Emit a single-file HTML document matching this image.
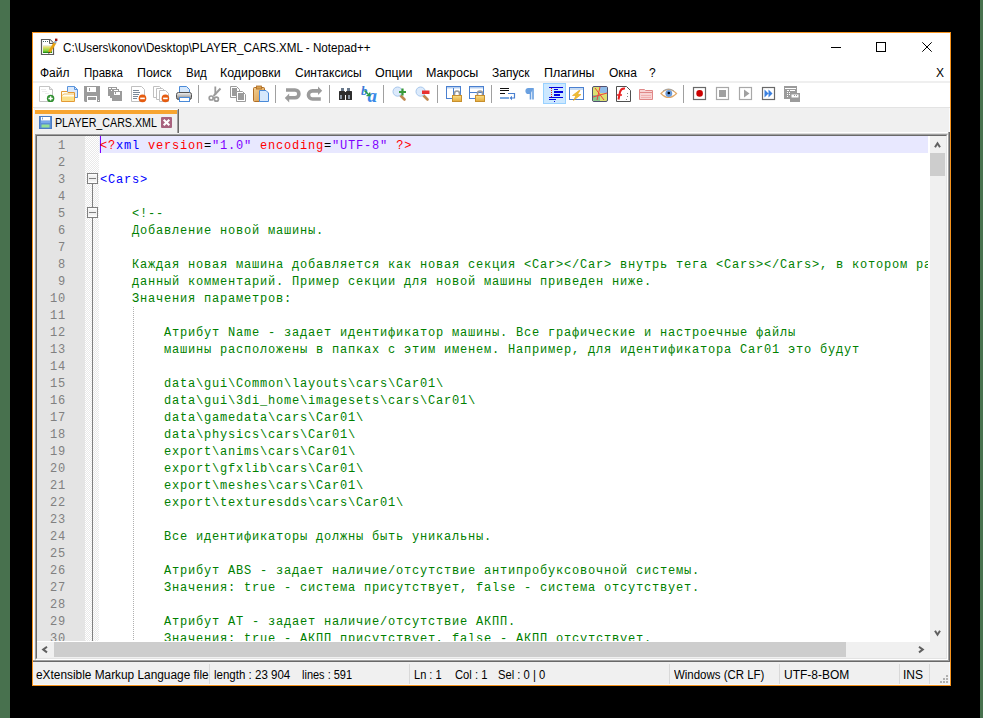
<!DOCTYPE html>
<html><head><meta charset="utf-8">
<style>
html,body{margin:0;padding:0}
body{width:983px;height:718px;background:#000;position:relative;overflow:hidden;font-family:"Liberation Sans",sans-serif;}
.a{position:absolute}
.t{position:absolute;white-space:pre;font-size:12px;line-height:12px;color:#000;transform-origin:0 0}
.ico{position:absolute;width:16px;height:16px}
.sep{position:absolute;width:1px;background:#a0a0a0}
.code{position:absolute;left:63px;white-space:pre;font-family:"Liberation Mono",monospace;font-size:12px;letter-spacing:0.8px;line-height:17px;height:17px;color:#008000;margin-top:2px}
.ln{position:absolute;left:0px;width:29px;text-align:right;white-space:pre;font-family:"Liberation Mono",monospace;font-size:12px;letter-spacing:0.8px;line-height:17px;height:17px;color:#808080;margin-top:2px}
.sb{position:absolute;top:664px;width:1px;height:20px;background:#d9d9d9}
</style></head><body>
<!-- desktop strips -->
<div class="a" style="left:0;top:0;width:10px;height:718px;background:#48714e"></div>
<div class="a" style="left:980px;top:0;width:3px;height:718px;background:#48714e"></div>

<!-- window -->
<div class="a" style="left:32px;top:32px;width:919px;height:654px;box-sizing:border-box;border:1px solid #f7941e;background:#fff"></div>

<!-- title -->
<div id="title" class="t" style="left:63px;top:42px;transform:scaleX(0.971)">C:\Users\konov\Desktop\PLAYER_CARS.XML - Notepad++</div>
<!-- window controls -->
<div class="a" style="left:831px;top:47px;width:10px;height:1px;background:#000"></div>
<div class="a" style="left:876px;top:42px;width:10px;height:10px;box-sizing:border-box;border:1px solid #000"></div>
<svg class="a" style="left:922px;top:42px" width="10" height="10"><path d="M0.3 0.3L9.7 9.7M9.7 0.3L0.3 9.7" stroke="#000" stroke-width="1"/></svg>

<!-- menu -->
<div class="t" id="mn1" style="left:40px;top:67px">Файл</div>
<div class="t" id="mn2" style="left:84px;top:67px;transform:scaleX(0.957)">Правка</div>
<div class="t" id="mn3" style="left:137px;top:67px;transform:scaleX(1.036)">Поиск</div>
<div class="t" id="mn4" style="left:186px;top:67px;transform:scaleX(0.96)">Вид</div>
<div class="t" id="mn5" style="left:220px;top:67px;transform:scaleX(1.03)">Кодировки</div>
<div class="t" id="mn6" style="left:295px;top:67px">Синтаксисы</div>
<div class="t" id="mn7" style="left:375px;top:67px;transform:scaleX(1.04)">Опции</div>
<div class="t" id="mn8" style="left:426px;top:67px;transform:scaleX(1.045)">Макросы</div>
<div class="t" id="mn9" style="left:492px;top:67px">Запуск</div>
<div class="t" id="mn10" style="left:544px;top:67px;transform:scaleX(1.04)">Плагины</div>
<div class="t" id="mn11" style="left:609px;top:67px">Окна</div>
<div class="t" id="mn12" style="left:649px;top:67px">?</div>
<div class="t" id="mnx" style="left:936px;top:67px">X</div>

<!-- toolbar -->
<div class="a" style="left:33px;top:81px;width:917px;height:2px;background:#efefef"></div>
<div class="a" style="left:33px;top:107px;width:917px;height:1px;background:#e3e3e3"></div>


<!-- tab bar -->
<div class="a" style="left:33px;top:108px;width:917px;height:552px;background:#f0f0f0"></div>
<div class="a" style="left:33px;top:108px;width:1px;height:552px;background:#fff"></div>
<div class="a" style="left:179px;top:132px;width:770px;height:1px;background:#fff"></div><div class="a" style="left:179px;top:133px;width:770px;height:1px;background:#dcdcdc"></div>
<!-- outer frame right/bottom dark -->
<div class="a" style="left:949px;top:108px;width:1px;height:24px;background:#fafcfe"></div>
<div class="a" style="left:948px;top:132px;width:1px;height:529px;background:#a0a0a0"></div><div class="a" style="left:949px;top:132px;width:1px;height:530px;background:#696969"></div>
<div class="a" style="left:33px;top:660px;width:916px;height:1px;background:#a0a0a0"></div><div class="a" style="left:33px;top:661px;width:917px;height:1px;background:#696969"></div>
<!-- tab -->
<div class="a" style="left:35px;top:109px;width:142px;height:25px;background:#f0f0f0;border-top:1px solid #fff"></div>
<div class="a" style="left:35px;top:110px;width:142px;height:4px;background:#f7a530"></div>
<div class="a" style="left:177px;top:110px;width:1px;height:23px;background:#a0a0a0"></div><div class="a" style="left:178px;top:109px;width:1px;height:24px;background:#696969"></div>
<div class="t" id="tabt" style="left:55px;top:117px;transform:scaleX(0.89)">PLAYER_CARS.XML</div>

<svg class="a" style="left:0;top:0" width="983" height="134" viewBox="0 0 983 134">
<defs>
<linearGradient id="gfold" x1="0" y1="0" x2="0" y2="1"><stop offset="0" stop-color="#fff3c8"/><stop offset="1" stop-color="#f7d36a"/></linearGradient>
<linearGradient id="gprn" x1="0" y1="0" x2="0" y2="1"><stop offset="0" stop-color="#f4f4f4"/><stop offset="0.5" stop-color="#b8b8b8"/><stop offset="1" stop-color="#777"/></linearGradient>
<linearGradient id="gclip" x1="0" y1="0" x2="1" y2="1"><stop offset="0" stop-color="#f2cf92"/><stop offset="1" stop-color="#d99a4a"/></linearGradient>
<linearGradient id="gnpp" x1="0" y1="0" x2="0" y2="1"><stop offset="0" stop-color="#e6f0ff"/><stop offset="0.25" stop-color="#e8e070"/><stop offset="0.75" stop-color="#7ed23a"/><stop offset="1" stop-color="#0a7a0a"/></linearGradient>
<linearGradient id="glock" x1="0" y1="0" x2="0" y2="1"><stop offset="0" stop-color="#fbe08a"/><stop offset="1" stop-color="#e2a93a"/></linearGradient>
</defs>
<!-- title icon -->
<path d="M41.5 39.5H50L53.5 43V54.5H41.5Z" fill="#fff" stroke="#5a5a5a" stroke-width="1.2"/>
<path d="M49.5 39.5V43.5H53.5" fill="#eee" stroke="#5a5a5a"/>
<path d="M43 41.5h1M45 41.5h1M47 41.5h1" stroke="#466" />
<rect x="43" y="45" width="9" height="8" fill="url(#gnpp)"/>
<path d="M49.2 52.3L55.5 42" stroke="#e8a010" stroke-width="2.6"/>
<path d="M54.6 43.2L56.2 40.6" stroke="#8ab0d8" stroke-width="2"/>
<rect x="55" y="38.6" width="2.4" height="2.4" fill="#a01010"/>
<path d="M48.5 53.5l1.2-1.5" stroke="#333" stroke-width="1.2"/>

<!-- 1 new -->
<path d="M39.5 86.5H49.5L52.5 89.5V101.5H39.5Z" fill="#fff" stroke="#c4c4c4"/>
<path d="M49.5 86.5V89.5H52.5" fill="#ececec" stroke="#c4c4c4"/>
<path d="M41 89.5h5M42 91.5h5M45 93.5h4" stroke="#ececec"/>
<circle cx="50.6" cy="98.4" r="3.7" fill="#2f8f2f"/>
<path d="M50.6 96.2v4.4M48.4 98.4h4.4" stroke="#fff" stroke-width="1.5"/>
<!-- 2 open -->
<path d="M67.5 86.5H74.5L77.5 89.5V97.5H67.5Z" fill="#dbe9fb" stroke="#5a94dc"/>
<path d="M74.5 86.5V89.5H77.5" fill="none" stroke="#5a94dc"/>
<path d="M61.5 91.5H67L68 92.5H74.5V101.5H61.5Z" fill="#fffdf2" stroke="#e39a35"/>
<path d="M62 96.5H74V101H62Z" fill="#fbe08a"/>
<path d="M62 95.5L64 94H74" fill="none" stroke="#f0c060"/>
<!-- 3 save -->
<path d="M84 86H100V102H85L84 101Z" fill="#9b9b9b"/>
<rect x="87" y="87" width="9" height="5" fill="#fff"/>
<rect x="89" y="88" width="1" height="3" fill="#9b9b9b"/>
<rect x="87" y="96" width="10" height="6" fill="#fff"/>
<rect x="88" y="97" width="8" height="3" fill="#9b9b9b"/>
<rect x="98" y="100" width="1" height="1" fill="#fff"/>
<!-- 4 save all -->
<rect x="108" y="87" width="9" height="9" fill="#9b9b9b"/>
<rect x="109" y="88" width="2" height="1" fill="#fff"/><rect x="112" y="88" width="4" height="1" fill="#fff"/>
<rect x="110" y="89" width="9" height="9" fill="#9b9b9b"/>
<rect x="110" y="89" width="1" height="1" fill="#9b9b9b"/>
<rect x="111" y="90" width="1" height="1" fill="#fff"/><rect x="114" y="90" width="4" height="1" fill="#fff"/>
<rect x="112" y="91" width="10" height="10" fill="#9b9b9b"/>
<rect x="114" y="92" width="6" height="3" fill="#fff"/>
<rect x="115" y="92" width="1" height="2" fill="#9b9b9b"/>
<!-- 5 close -->
<path d="M131.5 86.5H141.5L144.5 89.5V101.5H131.5Z" fill="#fff" stroke="#c0c0c0"/>
<path d="M133 90.5h6M133 92.5h7M133 94.5h6M133 96.5h5M133 98.5h4" stroke="#7a8898"/>
<circle cx="142.5" cy="98.4" r="3.8" fill="#e65c10"/>
<path d="M140.2 98.4h4.6" stroke="#fff" stroke-width="1.6"/>
<!-- 6 close all -->
<path d="M153.5 86.5H159.5L161.5 88.5V97.5H153.5Z" fill="#fff" stroke="#c0c0c0"/>
<path d="M156.5 88.5H162.5L164.5 90.5V99.5H156.5Z" fill="#fff" stroke="#c0c0c0"/>
<path d="M159.5 90.5H165.5L168.5 93.5V101.5H159.5Z" fill="#fff" stroke="#c0c0c0"/>
<circle cx="165.4" cy="98.4" r="3.8" fill="#e65c10"/>
<path d="M163.1 98.4h4.6" stroke="#fff" stroke-width="1.6"/>
<!-- 7 print -->
<path d="M179.5 86.5H186.5L189.5 89.5V94.5H179.5Z" fill="#d6e8fc" stroke="#4a8ad8"/>
<rect x="176.5" y="92.5" width="15" height="7" rx="2" fill="url(#gprn)" stroke="#505050"/>
<rect x="179.5" y="97.5" width="10" height="4" fill="#fff" stroke="#4a8ad8"/>
<!-- sep -->
<rect x="198" y="85" width="1" height="18" fill="#a0a0a0"/>
<!-- 8 cut -->
<path d="M215.3 86.5V95" stroke="#9b9b9b" stroke-width="1.8"/>
<path d="M220.5 88.5L213.5 96" stroke="#9b9b9b" stroke-width="1.9"/>
<circle cx="211.2" cy="98" r="2" fill="none" stroke="#9b9b9b" stroke-width="1.7"/>
<circle cx="216.4" cy="99.2" r="2" fill="none" stroke="#9b9b9b" stroke-width="1.7"/>
<!-- 9 copy -->
<path d="M230.5 86.5H236.5L239.5 89.5V97.5H230.5Z" fill="#fff" stroke="#9b9b9b"/>
<rect x="232" y="88" width="5" height="8" fill="#9b9b9b"/>
<path d="M236.5 91.5H242.5L245.5 94.5V101.5H236.5Z" fill="#fff" stroke="#9b9b9b"/>
<rect x="238" y="93" width="6" height="7" fill="#9b9b9b"/>
<!-- 10 paste -->
<rect x="253.5" y="87.5" width="11" height="14" rx="1" fill="url(#gclip)" stroke="#b06d25"/>
<rect x="256.5" y="86" width="5" height="3" fill="#d8a050" stroke="#b06d25" stroke-width="0.8"/>
<path d="M259.5 90.5H266L268.5 93V101.5H259.5Z" fill="#d6e8fc" stroke="#4a8ad8"/>
<!-- sep -->
<rect x="275" y="85" width="1" height="18" fill="#a0a0a0"/>
<!-- 11 undo -->
<path d="M286 90H295A3.9 3.9 0 0 1 295 97.8H288.5" fill="none" stroke="#9b9b9b" stroke-width="3.6"/>
<path d="M284.8 97.9L289.2 93.4V102.4Z" fill="#9b9b9b"/>
<!-- 12 redo -->
<path d="M318.5 90.9H312.5A4.05 4.05 0 0 0 312.5 99H320.8" fill="none" stroke="#9b9b9b" stroke-width="3.6"/>
<path d="M322.2 90.8L318 86.6V95Z" fill="#9b9b9b"/>
<!-- sep -->
<rect x="329" y="85" width="1" height="18" fill="#a0a0a0"/>
<!-- 13 find -->
<rect x="341" y="88" width="3" height="4" fill="#6a7a8c"/>
<rect x="347" y="88" width="3" height="4" fill="#6a7a8c"/>
<rect x="339" y="91" width="6" height="9" rx="0.5" fill="#2e2e2e"/>
<rect x="346" y="91" width="6" height="9" rx="0.5" fill="#2e2e2e"/>
<rect x="344" y="92" width="3" height="3" fill="#2e2e2e"/>
<rect x="340" y="95" width="2" height="4" fill="#8a96a4"/>
<rect x="348" y="95" width="2" height="4" fill="#8a96a4"/>
<!-- 14 replace -->
<text x="361" y="95" font-family="Liberation Serif" font-style="italic" font-weight="bold" font-size="13" fill="#3a7ad8">b</text>
<text x="367.5" y="101.5" font-family="Liberation Serif" font-style="italic" font-weight="bold" font-size="19" fill="#3a8ae8">a</text>
<path d="M364.5 90.5L369 95" stroke="#2a9a4a" stroke-width="1.6"/>
<path d="M366.5 95.6h3.2v-3.2" fill="none" stroke="#2a9a4a" stroke-width="1.4"/>
<!-- sep -->
<rect x="383" y="85" width="1" height="18" fill="#a0a0a0"/>
<!-- 15 zoom in -->
<path d="M400.5 95.5L404.5 99.5" stroke="#c08850" stroke-width="2.6" stroke-linecap="round"/>
<circle cx="397.6" cy="91.6" r="4.6" fill="#dceafb" stroke="#a8c8ec" stroke-width="1"/>
<path d="M402.5 88.5v7M399 92h7" stroke="#3a9a3a" stroke-width="2.2"/>
<!-- 16 zoom out -->
<path d="M423.5 95.5L427.5 99.5" stroke="#c08850" stroke-width="2.6" stroke-linecap="round"/>
<circle cx="420.6" cy="91.6" r="4.6" fill="#dceafb" stroke="#a8c8ec" stroke-width="1"/>
<rect x="422" y="90.5" width="7.5" height="3.5" fill="#e83030"/>
<!-- sep -->
<rect x="437" y="85" width="1" height="18" fill="#a0a0a0"/>
<!-- 17 sync v -->
<rect x="446.5" y="86.5" width="14" height="12" fill="#fff" stroke="#4a80d0"/>
<rect x="447" y="87" width="13" height="1.5" fill="#b8d0f0"/>
<path d="M453.5 88v10" stroke="#4a80d0"/>
<path d="M454.5 96V93.5A2.5 2.5 0 0 1 459.5 93.5V96" fill="none" stroke="#999" stroke-width="1.6"/>
<rect x="452.5" y="95.5" width="9" height="6" fill="url(#glock)" stroke="#c8902e"/>
<!-- 18 sync h -->
<rect x="469.5" y="86.5" width="14" height="12" fill="#fff" stroke="#4a80d0"/>
<rect x="470" y="87" width="13" height="1.5" fill="#b8d0f0"/>
<path d="M470 92.5h13" stroke="#4a80d0"/>
<path d="M477.5 96V93.5A2.5 2.5 0 0 1 482.5 93.5V96" fill="none" stroke="#999" stroke-width="1.6"/>
<rect x="475.5" y="95.5" width="9" height="6" fill="url(#glock)" stroke="#c8902e"/>
<!-- sep -->
<rect x="491" y="85" width="1" height="18" fill="#a0a0a0"/>
<!-- 19 wrap -->
<path d="M500 88.5h9M500 90.5h9M500 93.5h5" stroke="#111"/>
<path d="M500 98h9" stroke="#7aa8e0" stroke-width="2"/>
<path d="M508 93.5h6.5v4.5h-3" fill="none" stroke="#4a80d0" stroke-width="1.2"/>
<path d="M509.5 98l2.5-2.2v4.4z" fill="#4a80d0"/>
<!-- 20 pilcrow -->
<path d="M530.5 88.5v11M533 88.5v11" stroke="#6aa0e0" stroke-width="1.6"/>
<path d="M533.5 88.5H528.5A2.5 2.5 0 0 0 528.5 93.5H530.5" fill="#6aa0e0" stroke="#6aa0e0" stroke-width="1.2"/>
<!-- 21 indent guide active -->
<rect x="543.5" y="83.5" width="22" height="20" fill="#cce8ff" stroke="#99d1ff"/>
<path d="M549 87.5h14M554 89.5h4M549 97.5h14M549 99.5h7" stroke="#0000e0"/>
<rect x="554" y="91" width="9" height="2" fill="#0000e0"/>
<rect x="554" y="94" width="6" height="2" fill="#0000e0"/>
<rect x="554" y="101" width="1" height="1" fill="#0000e0"/>
<path d="M551.5 88v9" stroke="#e02020" stroke-dasharray="1 1"/>
<!-- 22 udl -->
<rect x="569.5" y="87.5" width="14" height="12" fill="#fff" stroke="#4a80d0"/>
<rect x="570" y="88" width="13" height="2" fill="#c8dcf4"/>
<path d="M579 90.5L572.5 95.5H576L573.5 100.5L581 94.5H577.5L580 90.5Z" fill="#f0c030" stroke="#e0a020" stroke-width="0.6"/>
<!-- 23 doc map -->
<rect x="592.5" y="86.5" width="15" height="15" rx="1.5" fill="#dde070" stroke="#505070"/>
<rect x="600" y="87" width="7" height="6" fill="#90bce8"/>
<rect x="593" y="95" width="7" height="6" fill="#8cc88c"/>
<path d="M595 88l9 12M600 87l-3 13M593 97l14-4" stroke="#f04040" stroke-width="1"/>
<!-- 24 function list -->
<path d="M616.5 86.5H626.5L630.5 90.5V101.5H616.5Z" fill="#fff" stroke="#505050"/>
<path d="M625 88.5Q621 88 620 92L618.5 99.5" fill="none" stroke="#e82020" stroke-width="2"/>
<path d="M617 95h5" stroke="#e82020" stroke-width="1.5"/>
<path d="M627.5 93v1M627.5 96v1M626.5 99v1" stroke="#888"/>
<!-- 25 folder workspace -->
<path d="M639.5 89.5H644.5L645.5 90.5H652.5V99.5H639.5Z" fill="#f8d4d4" stroke="#e08888"/>
<path d="M640 92.5h12" stroke="#e08888"/>
<path d="M641 95.5h10M641 97.5h10" stroke="#f0b0b0"/>
<!-- 26 eye -->
<path d="M661 93.5Q668.5 85.5 676.5 93.5Q668.5 101.5 661 93.5Z" fill="#fff" stroke="#e0a868" stroke-width="1.2"/>
<path d="M663 91Q668.5 87 674 91" fill="none" stroke="#a0a0a0" stroke-width="1"/>
<circle cx="668.8" cy="93.5" r="3.4" fill="#6a9ad8"/>
<circle cx="668.8" cy="93" r="1.3" fill="#000"/>
<!-- sep -->
<rect x="683" y="85" width="1" height="18" fill="#a0a0a0"/>
<!-- 27 record -->
<rect x="693.5" y="87.5" width="12" height="12" fill="#fff" stroke="#6a6a6a" stroke-width="1.2"/>
<circle cx="699.6" cy="93.4" r="3.3" fill="#cc0000"/>
<!-- 28 stop -->
<rect x="716.5" y="87.5" width="12" height="12" fill="#fff" stroke="#a8a8a8" stroke-width="1.2"/>
<rect x="719" y="90" width="7" height="7" fill="#a0a0a0"/>
<!-- 29 play -->
<rect x="739.5" y="87.5" width="12" height="12" fill="#fff" stroke="#a8a8a8" stroke-width="1.2"/>
<path d="M744 89.5L749.5 93.5L744 97.5Z" fill="#a0a0a0"/>
<!-- 30 play multi -->
<rect x="762.5" y="87.5" width="12" height="12" fill="#fff" stroke="#6a6a6a" stroke-width="1.2"/>
<path d="M764.5 89.5L768.5 93.5L764.5 97.5ZM768.5 89.5L772.5 93.5L768.5 97.5Z" fill="#3a80e0"/>
<!-- 31 save macro -->
<rect x="784" y="86" width="13" height="13" fill="#9b9b9b"/>
<path d="M785 88.5h11M787 90.5h2M790 90.5h5M787 92.5h1M787 94.5h1M787 96.5h1M789 92.5h1M789 94.5h1" stroke="#fff"/>
<rect x="790" y="93" width="10" height="9" fill="#9b9b9b"/>
<path d="M792 95.5h6" stroke="#fff"/>
<rect x="791.5" y="94.5" width="7" height="3" fill="#fff"/><rect x="794" y="95" width="1" height="1" fill="#9b9b9b"/><rect x="796" y="95" width="1" height="1" fill="#9b9b9b"/>

<!-- tab floppy -->
<rect x="39.5" y="116.5" width="12" height="12" fill="#5b8fd6" stroke="#4a7cc4"/>
<rect x="41" y="117" width="9" height="3.5" fill="#fff"/>
<rect x="42" y="117.5" width="1" height="2" fill="#7aa0d8"/>
<rect x="41" y="121" width="9" height="2" fill="#78a8ea"/>
<rect x="41.5" y="124.5" width="8" height="3" fill="#94e094"/>
<!-- tab close -->
<rect x="161" y="117" width="11" height="11" rx="1" fill="#a8627e"/>
<path d="M163.7 119.7L169.3 125.3M169.3 119.7L163.7 125.3" stroke="#fff" stroke-width="2.1"/>
</svg>

<!-- editor frame -->
<div class="a" style="left:35px;top:134px;width:913px;height:526px;box-sizing:border-box;border-top:1px solid #a0a0a0;border-left:1px solid #a0a0a0;border-right:1px solid #fff;border-bottom:1px solid #fff"></div>
<div class="a" style="left:36px;top:135px;width:911px;height:524px;box-sizing:border-box;border-top:1px solid #696969;border-left:1px solid #696969;border-right:1px solid #e3e3e3;border-bottom:1px solid #e3e3e3;background:#fff"></div>

<!-- editor content clip -->
<div class="a" id="ed" style="left:37px;top:136px;width:891px;height:505px;overflow:hidden;background:#fff">
<div class="a" style="left:0;top:0;width:48px;height:505px;background:#e4e4e4"></div>
<svg class="a" style="left:48px;top:0" width="14" height="505"><defs><pattern id="chk" width="2" height="2" patternUnits="userSpaceOnUse"><rect width="2" height="2" fill="#fff"/><rect width="1" height="1" fill="#e9e9e9"/><rect x="1" y="1" width="1" height="1" fill="#e9e9e9"/></pattern></defs><rect width="14" height="505" fill="url(#chk)"/></svg>
<div class="a" style="left:62px;top:0;width:829px;height:17px;background:#e8e8ff"></div>
<div class="a" style="left:63px;top:0;width:1px;height:17px;background:#8000ff"></div>
<div class="a" style="left:55px;top:47px;width:1px;height:460px;background:#808080"></div>
<div class="a" style="left:50px;top:37px;width:11px;height:11px;box-sizing:border-box;border:1px solid #808080;background:linear-gradient(#fff,#f0f0f0 30%,#f0f0f0 70%,#fff)"></div>
<div class="a" style="left:52px;top:42px;width:7px;height:1px;background:#808080"></div>
<div class="a" style="left:50px;top:71px;width:11px;height:11px;box-sizing:border-box;border:1px solid #808080;background:linear-gradient(#fff,#f0f0f0 30%,#f0f0f0 70%,#fff)"></div>
<div class="a" style="left:52px;top:76px;width:7px;height:1px;background:#808080"></div>
<div class="a" style="left:96px;top:171px;width:1px;height:340px;background:repeating-linear-gradient(#b0b0b0 0 1px,transparent 1px 2px)"></div>
<div class="ln" style="top:0px">1</div>
<div class="ln" style="top:17px">2</div>
<div class="ln" style="top:34px">3</div>
<div class="ln" style="top:51px">4</div>
<div class="ln" style="top:68px">5</div>
<div class="ln" style="top:85px">6</div>
<div class="ln" style="top:102px">7</div>
<div class="ln" style="top:119px">8</div>
<div class="ln" style="top:136px">9</div>
<div class="ln" style="top:153px">10</div>
<div class="ln" style="top:170px">11</div>
<div class="ln" style="top:187px">12</div>
<div class="ln" style="top:204px">13</div>
<div class="ln" style="top:221px">14</div>
<div class="ln" style="top:238px">15</div>
<div class="ln" style="top:255px">16</div>
<div class="ln" style="top:272px">17</div>
<div class="ln" style="top:289px">18</div>
<div class="ln" style="top:306px">19</div>
<div class="ln" style="top:323px">20</div>
<div class="ln" style="top:340px">21</div>
<div class="ln" style="top:357px">22</div>
<div class="ln" style="top:374px">23</div>
<div class="ln" style="top:391px">24</div>
<div class="ln" style="top:408px">25</div>
<div class="ln" style="top:425px">26</div>
<div class="ln" style="top:442px">27</div>
<div class="ln" style="top:459px">28</div>
<div class="ln" style="top:476px">29</div>
<div class="ln" style="top:493px">30</div>
<div class="code" style="top:0px;opacity:1"><span style="color:#f00">&lt;?</span><span style="color:#00f">xml</span><span style="color:#f00"> version</span><span style="color:#000">=</span><span style="color:#8000ff">"1.0"</span><span style="color:#f00"> encoding</span><span style="color:#000">=</span><span style="color:#8000ff">"UTF-8"</span><span style="color:#f00"> ?&gt;</span></div>
<div class="code" style="top:34px;color:#00f;opacity:1">&lt;Cars&gt;</div>
<div class="code" style="top:68px">    &lt;!--</div>
<div class="code" style="top:85px">    Добавление новой машины.</div>
<div class="code" style="top:119px">    Каждая новая машина добавляется как новая секция &lt;Car&gt;&lt;/Car&gt; внутрь тега &lt;Cars&gt;&lt;/Cars&gt;, в котором расположен</div>
<div class="code" style="top:136px">    данный комментарий. Пример секции для новой машины приведен ниже.</div>
<div class="code" style="top:153px">    Значения параметров:</div>
<div class="code" style="top:187px">        Атрибут Name - задает идентификатор машины. Все графические и настроечные файлы</div>
<div class="code" style="top:204px">        машины расположены в папках с этим именем. Например, для идентификатора Car01 это будут</div>
<div class="code" style="top:238px">        data\gui\Common\layouts\cars\Car01\</div>
<div class="code" style="top:255px">        data\gui\3di_home\imagesets\cars\Car01\</div>
<div class="code" style="top:272px">        data\gamedata\cars\Car01\</div>
<div class="code" style="top:289px">        data\physics\cars\Car01\</div>
<div class="code" style="top:306px">        export\anims\cars\Car01\</div>
<div class="code" style="top:323px">        export\gfxlib\cars\Car01\</div>
<div class="code" style="top:340px">        export\meshes\cars\Car01\</div>
<div class="code" style="top:357px">        export\texturesdds\cars\Car01\</div>
<div class="code" style="top:391px">        Все идентификаторы должны быть уникальны.</div>
<div class="code" style="top:425px">        Атрибут ABS - задает наличие/отсутствие антипробуксовочной системы.</div>
<div class="code" style="top:442px">        Значения: true - система присутствует, false - система отсутствует.</div>
<div class="code" style="top:476px">        Атрибут AT - задает наличие/отсутствие АКПП.</div>
<div class="code" style="top:493px">        Значения: true - АКПП присутствует, false - АКПП отсутствует.</div>
</div>
<div class="a" style="left:37px;top:641px;width:893px;height:1px;background:#fff"></div>
<!-- v scroll -->
<div class="a" style="left:930px;top:136px;width:16px;height:506px;background:#f0f0f0"></div>
<svg class="a" style="left:933px;top:141px" width="10" height="9"><path d="M2 6.3L4.5 2.3L7 6.3" fill="none" stroke="#606060" stroke-width="2"/></svg>
<div class="a" style="left:930px;top:153px;width:15px;height:23px;background:#cdcdcd"></div>
<svg class="a" style="left:933px;top:628px" width="10" height="9"><path d="M2 2.7L4.5 6.7L7 2.7" fill="none" stroke="#606060" stroke-width="2"/></svg>
<!-- h scroll -->
<div class="a" style="left:37px;top:642px;width:909px;height:16px;background:#f0f0f0"></div>
<svg class="a" style="left:40px;top:645px" width="10" height="10"><path d="M7 1.8L3.2 4.6L7 7.4" fill="none" stroke="#606060" stroke-width="2"/></svg>
<div class="a" style="left:54px;top:642px;width:792px;height:15px;background:#cdcdcd"></div>
<svg class="a" style="left:916px;top:645px" width="10" height="10"><path d="M3 1.8L6.8 4.6L3 7.4" fill="none" stroke="#606060" stroke-width="2"/></svg>


<!-- status bar -->
<div class="a" style="left:33px;top:662px;width:917px;height:23px;background:#f0f0f0"></div>
<div class="t" id="st1" style="left:36px;top:669px;transform:scaleX(0.988)">eXtensible Markup Language file</div>
<div class="sb" style="left:209px"></div>
<div class="t" id="st2" style="left:214px;top:669px;transform:scaleX(0.96)">length : 23 904</div>
<div class="t" id="st3" style="left:302px;top:669px;transform:scaleX(0.915)">lines : 591</div>
<div class="sb" style="left:409px"></div>
<div class="t" id="st4" style="left:414px;top:669px;transform:scaleX(0.92)">Ln : 1</div>
<div class="t" id="st5" style="left:455px;top:669px;transform:scaleX(0.935)">Col : 1</div>
<div class="t" id="st6" style="left:498px;top:669px;transform:scaleX(0.935)">Sel : 0 | 0</div>
<div class="sb" style="left:669px"></div>
<div class="t" id="st7" style="left:674px;top:669px;transform:scaleX(0.955)">Windows (CR LF)</div>
<div class="sb" style="left:779px"></div>
<div class="t" id="st8" style="left:784px;top:669px">UTF-8-BOM</div>
<div class="sb" style="left:899px"></div>
<div class="t" id="st9" style="left:903px;top:669px">INS</div>
<div class="sb" style="left:929px"></div>
<div class="a" style="left:946px;top:675px;width:2px;height:2px;background:#b0b0b0"></div>
<div class="a" style="left:943px;top:678px;width:2px;height:2px;background:#b0b0b0"></div>
<div class="a" style="left:946px;top:678px;width:2px;height:2px;background:#b0b0b0"></div>
<div class="a" style="left:940px;top:681px;width:2px;height:2px;background:#b0b0b0"></div>
<div class="a" style="left:943px;top:681px;width:2px;height:2px;background:#b0b0b0"></div>
<div class="a" style="left:946px;top:681px;width:2px;height:2px;background:#b0b0b0"></div>
<div class="a" style="left:33px;top:684px;width:917px;height:1px;background:#f4f8fc"></div>
<div class="a" style="left:949px;top:662px;width:1px;height:23px;background:#f4f8fc"></div>
</body></html>
